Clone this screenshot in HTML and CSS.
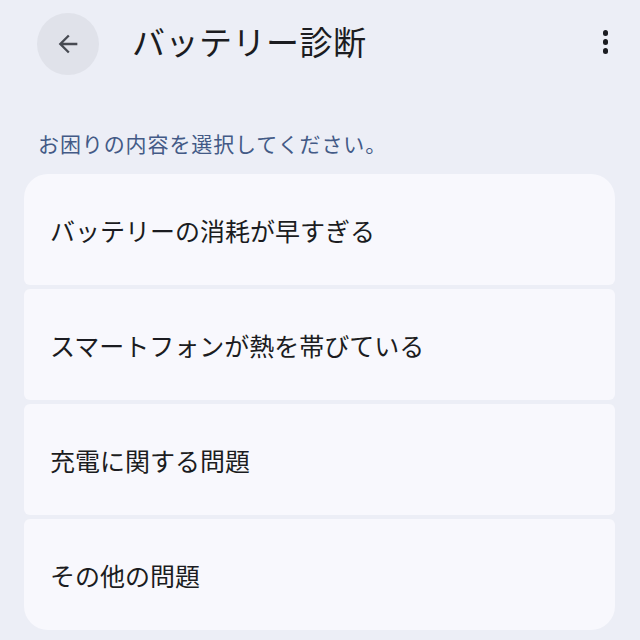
FILE: index.html
```html
<!DOCTYPE html>
<html lang="ja">
<head>
    <meta charset="UTF-8">
    <meta name="viewport" content="width=device-width, initial-scale=1.0">
    <title>バッテリー診断</title>
    <link rel="stylesheet" href="styles.css">
</head>
<body>
    <div class="topbar">
        <button class="back" aria-label="戻る">
            <svg width="28" height="28" viewBox="0 0 24 24">
                <path d="M20 11H7.83l5.59-5.59L12 4l-8 8 8 8 1.41-1.41L7.83 13H20v-2z" fill="#474a52"/>
            </svg>
        </button>
        <h1>バッテリー診断</h1>
        <div class="more">
            <span></span><span></span><span></span>
        </div>
    </div>

    <p class="hint">お困りの内容を選択してください。</p>

    <div class="list">
        <div class="item">バッテリーの消耗が早すぎる</div>
        <div class="item">スマートフォンが熱を帯びている</div>
        <div class="item">充電に関する問題</div>
        <div class="item">その他の問題</div>
    </div>
</body>
</html>
```

FILE: styles.css
```css
* {
    font-family: "Noto Sans CJK JP", "Noto Sans", sans-serif;
    box-sizing: border-box;
}

body {
    margin: 0;
    background-color: #eceef6;
    color: #1b1c21;
}

.topbar {
    display: flex;
    align-items: center;
    height: 88px;
    padding: 0 20px 0 37px;
}

.back {
    width: 62px;
    height: 62px;
    border: none;
    border-radius: 50%;
    background-color: #e0e2ea;
    display: flex;
    align-items: center;
    justify-content: center;
    padding: 0;
}

h1 {
    flex: 1;
    margin: 0 0 6px 33px;
    font-size: 33px;
    font-weight: 400;
    letter-spacing: 0.5px;
}

.more {
    display: flex;
    flex-direction: column;
    gap: 3.5px;
    padding: 0 12px;
    margin-bottom: 4px;
}

.more span {
    width: 5.5px;
    height: 5.5px;
    border-radius: 50%;
    background-color: #1b1c21;
}

.hint {
    margin: 42px 0 0 38px;
    font-size: 21px;
    letter-spacing: 0.9px;
    color: #435a86;
    line-height: 26px;
}

.list {
    display: flex;
    flex-direction: column;
    gap: 4px;
    margin: 18px 25px 0 24px;
}

.item {
    height: 111px;
    display: flex;
    align-items: center;
    padding-left: 26px;
    font-size: 25px;
    background-color: #f8f8fd;
    border-radius: 6px;
}

.item:first-child {
    border-radius: 24px 24px 6px 6px;
}

.item:last-child {
    border-radius: 6px 6px 24px 24px;
}
```
